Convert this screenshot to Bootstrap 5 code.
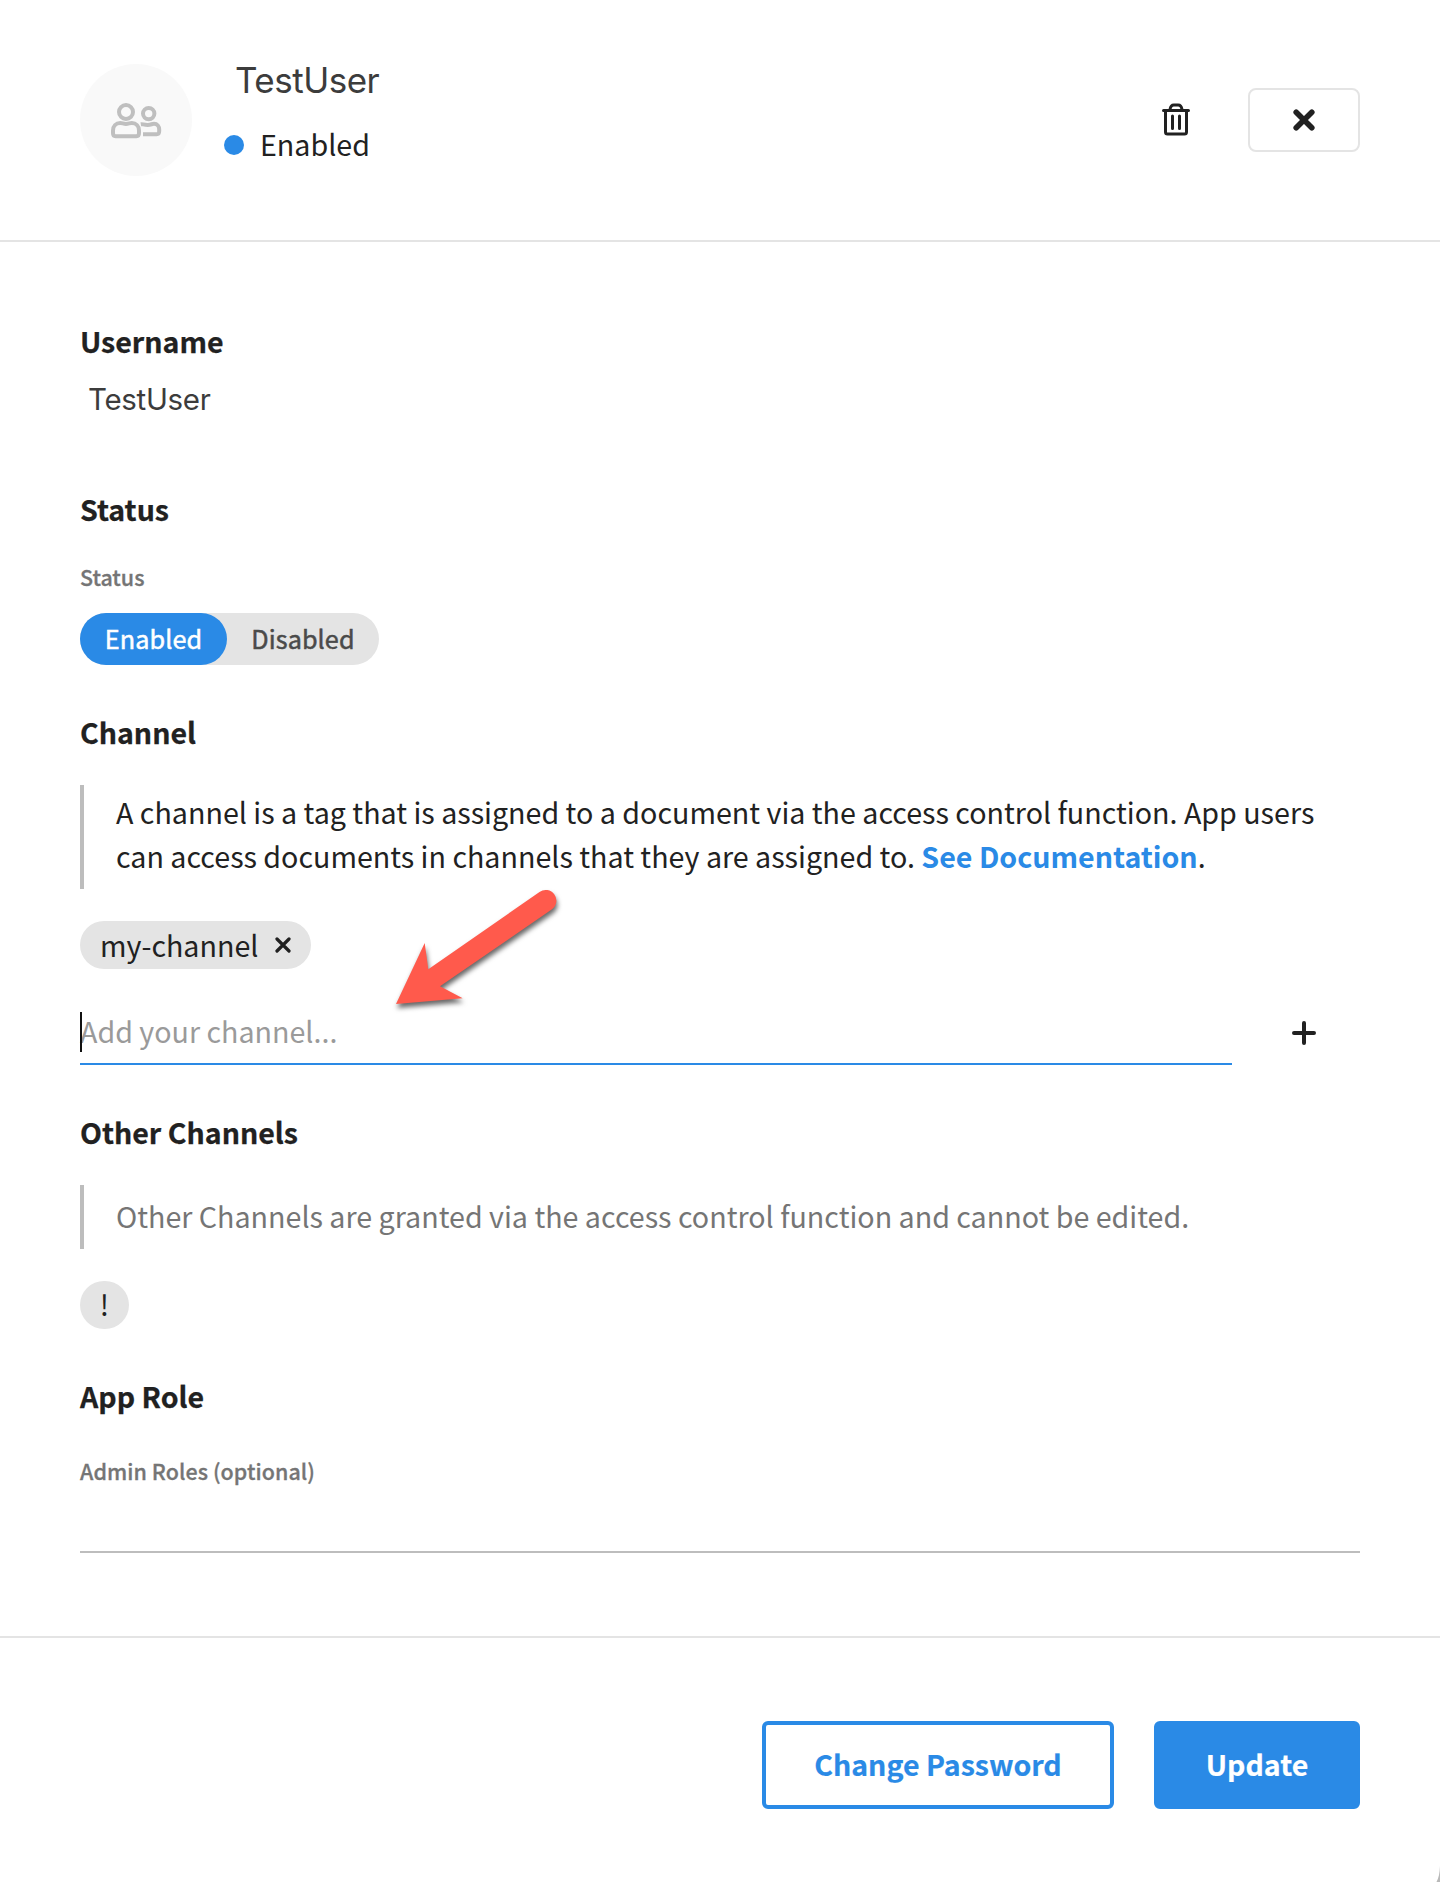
<!DOCTYPE html>
<html lang="en">
<head>
<meta charset="utf-8">
<meta name="viewport" content="width=device-width, initial-scale=1">
<title>TestUser</title>
<link href="https://cdn.jsdelivr.net/npm/bootstrap@5.3.0/dist/css/bootstrap.min.css" rel="stylesheet">
<style>
:root{--ink:#212121;--blue:#2a8ae6;--soft:#e4e4e4;--rule:#bdbdbd;--muted:#757575}
body{font-family:"Noto Sans CJK SC","Open Sans",sans-serif;font-size:28.65px;line-height:40px;color:var(--ink);background:#fff}
.panel{height:1882px;overflow:hidden}
.panel-head{height:242px;padding:58px 80px 0;border-bottom:2px solid var(--soft)}
.avatar{width:112px;height:112px;margin-top:6px;padding-top:1px;background:#f9f9f9}
.head-text{margin-left:32px}
.user-title{font:400 35px/44px Inter,sans-serif;letter-spacing:-.5px;color:#3c3c3c;margin:0 0 22px 11px}
.dot{width:20px;height:20px;margin-top:2px;background:var(--blue)}
.btn-trash{width:28px;height:34px;margin:44px 58px 0 0}
.btn-close-box{width:112px;height:64px;margin-top:30px;border:2px solid var(--soft);border-radius:8px;background:#fff}
.panel-body{padding:79px 80px 83px}
.section-title{font-size:28.55px;font-weight:700;line-height:40px;margin:0;-webkit-text-stroke:.25px}
.user-value{font:400 29.5px/40px Inter,sans-serif;letter-spacing:-.32px;color:#3c3c3c;padding-left:8px;margin:18px 0 70px}
.field-label{font-size:21.45px;font-weight:500;line-height:30px;color:var(--muted);-webkit-text-stroke:.3px}
.label-status{margin-top:33px}
.label-roles{margin-top:40px;letter-spacing:.07px}
.toggle{height:52px;width:299px;margin-top:21px;background:var(--soft);font-size:25.2px;font-weight:500;line-height:50px;-webkit-text-stroke:.5px}
.toggle button{border:0;padding:0 0 2px;background:none;color:#4a4a4a;letter-spacing:.1px}
.toggle .on{width:147px;background:var(--blue);color:#fff}
.toggle .off{width:152px}
.title-next{margin-top:47px}
.note{border-left:4px solid var(--rule);line-height:44px;padding-left:32px;margin-top:33px}
.note a{color:var(--blue);font-weight:700;font-size:28.6px;text-decoration:none}
.note-main{height:104px;padding-top:5px}
.note-other{height:64px;padding-top:9px;color:var(--muted)}
.chips{margin-top:32px}
.chip{height:48px;background:var(--soft)}
.chip-channel{width:231px;padding:0 0 1px 20px;gap:17px}
.chip-mark{width:49px;line-height:45px}
.channel-row{margin-top:40px}
.channel-input{width:1152px;height:56px;padding-top:2px;border-bottom:2px solid var(--blue);color:#9a9a9a}
.caret{left:0;top:3px;width:2px;height:40px;background:#111}
.btn-plus{margin:12px 0 0 60px}
.role-input{border-bottom:2px solid var(--rule);height:82px;margin-top:-15px}
.panel-foot{border-top:2px solid var(--soft);padding:83px 80px 0;gap:40px}
.panel-foot .btn{height:88px;border-width:4px;border-radius:6px;font-size:28.55px;font-weight:700;line-height:40px;padding:0 0 2px;border-color:var(--blue);-webkit-text-stroke:.2px}
.btn-pass{width:352px;color:var(--blue);background:#fff}
.btn-update{width:206px;color:#fff;background:var(--blue)}
.arrow{left:380px;top:870px;filter:drop-shadow(1px 4px 2.5px rgba(0,0,0,.6))}
.corner{right:0;bottom:0}
</style>
</head>
<body>
<div class="panel position-relative d-flex flex-column">
  <header class="panel-head d-flex align-items-start">
    <div class="avatar rounded-circle d-flex align-items-center justify-content-center">
      <svg width="60" height="48" viewBox="0 0 60 48" fill="none" stroke="#bfbfbf" stroke-width="4" stroke-linejoin="round">
        <circle cx="20" cy="15" r="7"/><circle cx="42.700" cy="16.600" r="5.700"/>
        <path d="M7 36v-2.500c0-4.500 3-7.500 7.200-7.500 2 0 3.300.9 5.800.9s3.800-.9 5.800-.9c4.200 0 7.200 3 7.200 7.500V36c0 1.900-.6 3.200-2.600 3.200H9.600c-2 0-2.600-1.300-2.600-3.200z"/>
        <path d="M34.800 27.200c1.800-.3 3 .7 7 .7 3.200 0 4-1.100 6.200-1.100 3.300 0 5.200 2.500 5.200 5.700V34c0 2.200-.6 3.200-2.600 3.200H37"/>
      </svg>
    </div>
    <div class="head-text flex-grow-1">
      <h1 class="user-title">TestUser</h1>
      <div class="d-flex align-items-center gap-3"><span class="dot rounded-circle"></span><span>Enabled</span></div>
    </div>
    <button class="btn-trash border-0 p-0 bg-transparent d-flex" aria-label="Delete">
      <svg width="28" height="34" viewBox="0 0 28 34" fill="none" stroke="#212121" stroke-width="3" stroke-linecap="round" stroke-linejoin="round">
        <path d="M1.500 8.500h25M3.500 8.500v21.500a2 2 0 0 0 2 2h17a2 2 0 0 0 2-2V8.500M8 7.500c.5-3 1.800-4.500 3.800-4.500h4.400c2 0 3.300 1.500 3.800 4.500M10.500 14v12.500M17.500 14v12.500"/>
      </svg>
    </button>
    <button class="btn-close-box d-flex align-items-center justify-content-center" aria-label="Close">
      <svg width="22" height="22" viewBox="0 0 22 22" stroke="#212121" stroke-width="5.600" stroke-linecap="round"><path d="M3.200 3.200l15.600 15.600M18.800 3.200L3.200 18.800"/></svg>
    </button>
  </header>

  <main class="panel-body">
    <h2 class="section-title">Username</h2>
    <div class="user-value">TestUser</div>

    <h2 class="section-title">Status</h2>
    <div class="field-label label-status">Status</div>
    <div class="toggle rounded-pill d-flex">
      <button class="on rounded-pill">Enabled</button><button class="off">Disabled</button>
    </div>

    <h2 class="section-title title-next">Channel</h2>
    <div class="note note-main">A channel is a tag that is assigned to a document via the access control function. App users<br>can access documents in channels that they are assigned to. <a href="#">See Documentation</a>.</div>
    <div class="chips d-flex">
      <span class="chip rounded-pill d-inline-flex align-items-center chip-channel">my-channel
        <svg width="16" height="16" viewBox="0 0 16 16" stroke="#212121" stroke-width="3.200" stroke-linecap="round"><path d="M2 2l12 12M14 2L2 14"/></svg>
      </span>
    </div>
    <div class="channel-row d-flex">
      <div class="channel-input position-relative"><span class="caret position-absolute"></span>Add your channel...</div>
      <button class="btn-plus border-0 bg-transparent p-0 d-flex" aria-label="Add">
        <svg width="24" height="24" viewBox="0 0 24 24" stroke="#212121" stroke-width="4" stroke-linecap="round"><path d="M12 2v20M2 12h20"/></svg>
      </button>
    </div>

    <h2 class="section-title title-next">Other Channels</h2>
    <div class="note note-other">Other Channels are granted via the access control function and cannot be edited.</div>
    <div class="chips d-flex"><span class="chip chip-mark rounded-pill text-center">!</span></div>

    <h2 class="section-title title-next">App Role</h2>
    <div class="field-label label-roles">Admin Roles (optional)</div>
    <div class="role-input"></div>
  </main>

  <footer class="panel-foot d-flex justify-content-end">
    <button class="btn btn-pass">Change Password</button>
    <button class="btn btn-update">Update</button>
  </footer>

  <svg class="arrow position-absolute" width="200" height="160" viewBox="0 0 200 160"><path fill="#ff5a4c" d="M16 134L44.700 73 48.300 99.300 159.500 22A10.500 10.500 0 0 1 172 39.300L60 116.300 82.700 128.300z"/></svg>
  <svg class="corner position-absolute" width="6" height="16" viewBox="0 0 6 16"><path fill="#b9b9b9" d="M6 0v16H2.500C4.800 12 5.600 7 6 0z"/></svg>
</div>
<script src="https://cdn.jsdelivr.net/npm/bootstrap@5.3.0/dist/js/bootstrap.bundle.min.js"></script>
</body>
</html>
